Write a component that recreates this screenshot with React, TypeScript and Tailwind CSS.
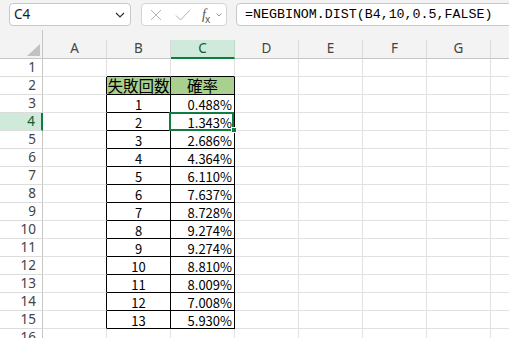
import React from "react";

const COLS = ["A", "B", "C", "D", "E", "F", "G", "H"];
const DATA: [string, string][] = [
  ["1", "0.488%"],
  ["2", "1.343%"],
  ["3", "2.686%"],
  ["4", "4.364%"],
  ["5", "6.110%"],
  ["6", "7.637%"],
  ["7", "8.728%"],
  ["8", "9.274%"],
  ["9", "9.274%"],
  ["10", "8.810%"],
  ["11", "8.009%"],
  ["12", "7.008%"],
  ["13", "5.930%"],
];

const jp = { fontFamily: '"Noto Sans CJK JP", "Noto Sans", sans-serif' };
const ui = { fontFamily: '"Noto Sans", "Open Sans", sans-serif' };

function Toolbar() {
  return (
    <div className="flex h-[30px] pt-[3px] items-start">
      <div
        className="ml-[9px] w-[122px] h-[23px] shrink-0 bg-white border border-[#c8c8c8] rounded-[4px] flex items-center justify-between pl-[4px] pr-[5px]"
        style={ui}
      >
        <span className="text-[13.5px] text-[#1a1a1a] leading-none">C4</span>
        <svg width="10" height="6" viewBox="0 0 10 6" fill="none">
          <path d="M1 1l4 4 4-4" stroke="#333" strokeWidth="1.2" />
        </svg>
      </div>
      <div className="ml-[10px] w-[86px] h-[23px] shrink-0 bg-white border border-[#d4d4d4] rounded-[4px] flex items-center pl-[8px]">
        <svg width="12" height="12" viewBox="0 0 12 12" fill="none">
          <path d="M1 1l10 10M11 1L1 11" stroke="#b4b4b4" strokeWidth="1" />
        </svg>
        <svg className="ml-[13px]" width="16" height="12" viewBox="0 0 16 12" fill="none">
          <path d="M1 6.5l4.5 4.5L15 1" stroke="#b4b4b4" strokeWidth="1" />
        </svg>
        <span className="ml-[11px] text-[#555] leading-none flex items-end" style={{ fontFamily: '"Liberation Serif", serif' }}>
          <span className="italic text-[14px]">f</span>
          <span className="text-[10px] -ml-[1px] translate-y-[2px]" style={ui}>x</span>
        </span>
        <svg className="ml-[6px]" width="6" height="4" viewBox="0 0 6 4" fill="none">
          <path d="M0.5 0.5l2.5 2.5 2.5-2.5" stroke="#999" strokeWidth="1" />
        </svg>
      </div>
      <div className="ml-[9px] w-[300px] h-[23px] shrink-0 bg-white border border-[#c8c8c8] rounded-l-[4px] flex items-center pl-[8px]">
        <span className="text-[13.3px] text-black leading-none whitespace-pre" style={{ fontFamily: '"Liberation Mono", monospace' }}>
          =NEGBINOM.DIST(B4,10,0.5,FALSE)
        </span>
      </div>
    </div>
  );
}

function HeaderRow() {
  return (
    <div className="flex h-[29px]" style={ui}>
      <div className="w-[43px] h-[29px] shrink-0 border-r border-b border-[#c6c6c6] flex items-end justify-end pr-[2px] pb-[2px]">
        <svg width="13" height="12" viewBox="0 0 13 12">
          <path d="M13 0L13 12L0 12Z" fill="#c2c2c2" />
        </svg>
      </div>
      {COLS.map((c) => {
        const sel = c === "C";
        return (
          <div key={c} className="flex flex-col w-[64px] shrink-0">
            <div className="h-[10px] border-b-0" />
            <div
              className={
                "h-[19px] border-r flex items-center justify-center text-[13.5px] leading-none " +
                (sel
                  ? "bg-[#cfeada] border-r-[#b9dcc6] border-b-2 border-b-[#107c41] text-[#0d5c31] pt-[1px]"
                  : "border-r-[#dadada] border-b border-b-[#c6c6c6] text-[#444]")
              }
            >
              {c}
            </div>
          </div>
        );
      })}
    </div>
  );
}

function Row({ n }: { n: number }) {
  const selRow = n === 4;
  const inTable = n >= 2 && n <= 15;
  const d = n >= 3 && n <= 15 ? DATA[n - 3] : null;
  const headerRow = n === 2;
  return (
    <div className="flex h-[18px]">
      <div
        className={
          "w-[43px] h-[18px] shrink-0 border-b border-b-[#dcdcdc] flex items-center justify-end pr-[6px] text-[13.5px] leading-none " +
          (selRow
            ? "bg-[#cfeada] border-r-2 border-r-[#107c41] text-[#0d5c31]"
            : "border-r border-r-[#c6c6c6] text-[#444]")
        }
        style={ui}
      >
        {n}
      </div>
      {COLS.map((c) => {
        let cls = "w-[64px] h-[18px] shrink-0 border-r border-b border-[#e1e1e1] relative";
        let content: React.ReactNode = null;
        if (c === "A" && inTable) cls = "w-[64px] h-[18px] shrink-0 border-r border-r-black border-b border-b-[#e1e1e1]";
        if ((c === "B" || c === "C") && n === 1) cls = "w-[64px] h-[18px] shrink-0 border-r border-r-[#e1e1e1] border-b border-b-black";
        if ((c === "B" || c === "C") && inTable) {
          cls = "w-[64px] h-[18px] shrink-0 border-r border-b border-black relative flex items-center overflow-visible " +
            (headerRow ? "bg-[#a9d08e] justify-center" : c === "B" ? "justify-center" : "justify-end pr-[2px]");
          if (headerRow) {
            content = (
              <span className="text-[15.5px] leading-[17px] text-black" style={jp}>
                {c === "B" ? "失敗回数" : "確率"}
              </span>
            );
          } else if (d) {
            content = (
              <span className="text-[13px] leading-[17px] text-black pt-[1px]" style={jp}>
                {c === "B" ? d[0] : d[1]}
              </span>
            );
          }
        }
        const selCell = c === "C" && n === 4;
        return (
          <div key={c} className={cls}>
            {content}
            {selCell && (
              <>
                <div className="absolute left-[-2px] top-[-1px] w-[65px] h-[19px] border-2 border-[#107c41] pointer-events-none" />
                <div className="absolute right-[-3px] bottom-[-3px] w-[6px] h-[6px] bg-[#107c41] border border-white z-10" />
              </>
            )}
          </div>
        );
      })}
    </div>
  );
}

export default function App() {
  const rows = Array.from({ length: 16 }, (_, i) => i + 1);
  return (
    <div className="w-[509px] h-[338px] overflow-hidden bg-[#f3f3f3]">
      <Toolbar />
      <HeaderRow />
      <div className="bg-white">
        {rows.map((n) => (
          <Row key={n} n={n} />
        ))}
      </div>
    </div>
  );
}
